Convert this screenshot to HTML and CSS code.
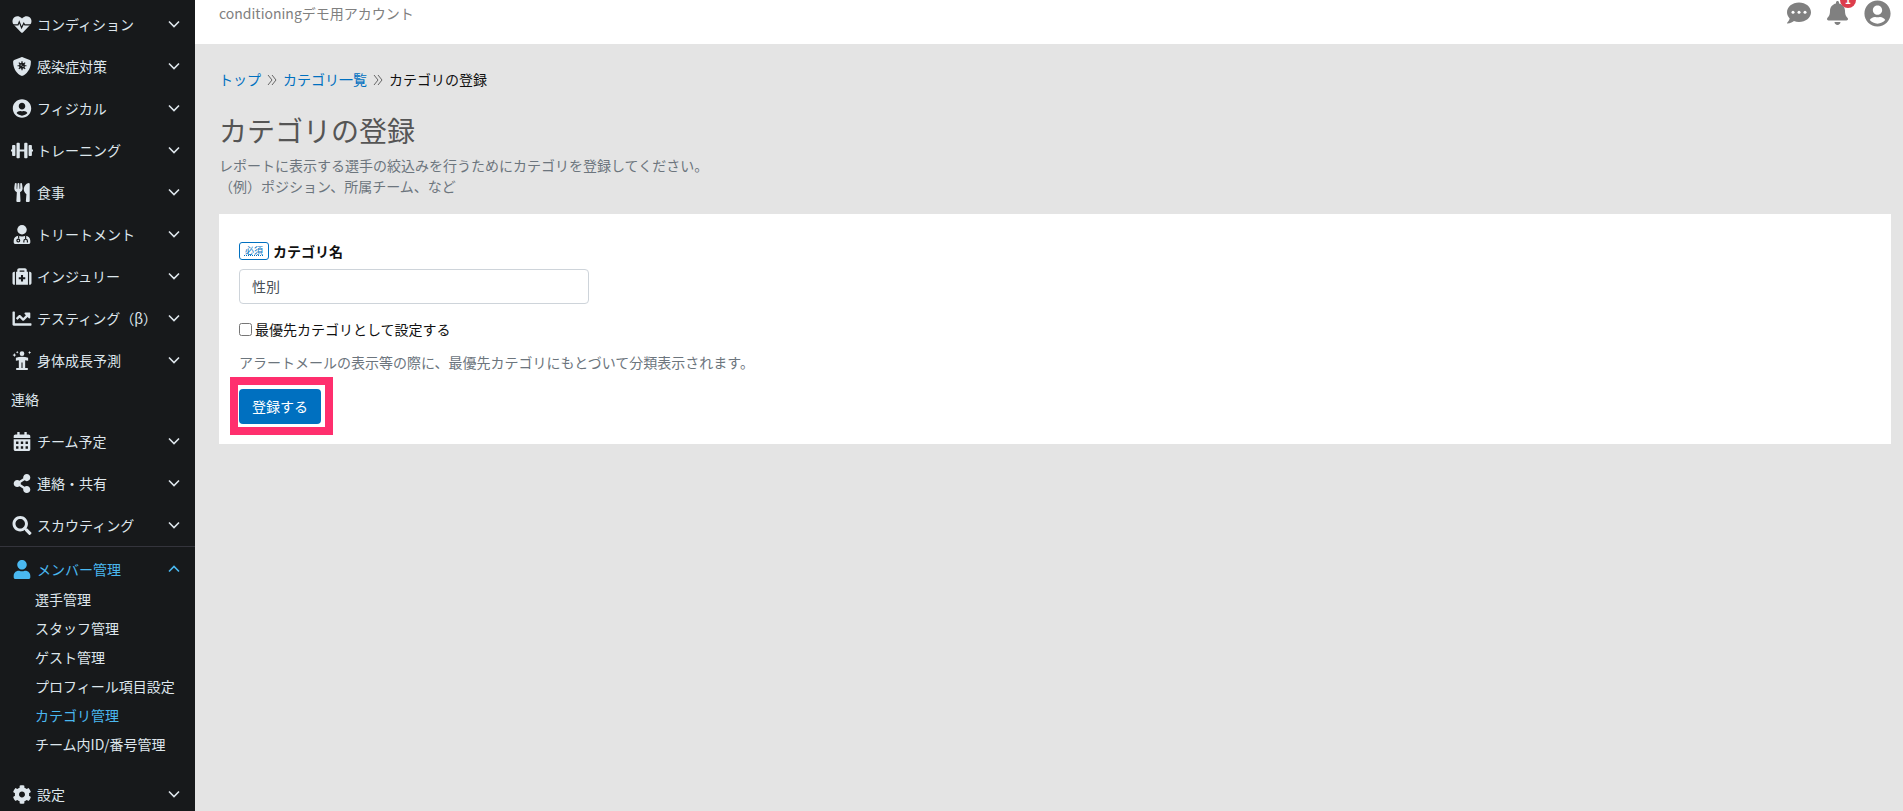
FILE: index.html
```
<!DOCTYPE html>
<html lang="ja">
 <head>
  <meta charset="utf-8">
  <title>カテゴリの登録</title>
  <meta name="viewport" content="width=device-width,initial-scale=1.0">
  <link rel="stylesheet" href="styles.css">
 </head>
 <body>
  <svg class="defs">
   <symbol id="down" viewBox="0 0 12 12"><path d="M1 3.5l5 5 5-5" fill="none" stroke="currentColor" stroke-width="1.6"/></symbol>
   <symbol id="up" viewBox="0 0 12 12"><path d="M1 8.5l5-5 5 5" fill="none" stroke="currentColor" stroke-width="1.6"/></symbol>
   <symbol id="person" viewBox="0 0 496 512"><path d="M248 8C111 8 0 119 0 256s111 248 248 248 248-111 248-248S385 8 248 8zm0 96c48.6 0 88 39.4 88 88s-39.4 88-88 88-88-39.4-88-88 39.4-88 88-88zm0 344c-58.7 0-111.3-26.6-146.5-68.2 18.8-35.4 55.6-59.8 98.5-59.8 2.4 0 4.8.4 7.1 1.1 13 4.2 26.6 6.9 40.9 6.9 14.3 0 28-2.7 40.9-6.9 2.3-.7 4.7-1.1 7.1-1.1 42.9 0 79.7 24.4 98.5 59.8C359.3 421.4 306.7 448 248 448z"/></symbol>
  </svg>
  <nav class="sidebar">
   <a class="item" href="#"><svg class="icon" viewBox="0 0 512 512"><path d="M462 62c-55-47-136-38-186 14l-20 20-20-20C186 24 105 15 50 62c-63 54-66 150-10 208l193 200c13 13 33 13 46 0l193-200c56-58 53-154-10-208z"/><path class="cut" d="M0 268h148l34-82 62 156 60-122 28 48h180"/></svg><span>コンディション</span><svg class="arrow"><use href="#down"/></svg></a>
   <a class="item" href="#"><svg class="icon" viewBox="0 0 512 512"><path d="M466 84L274 4c-12-5-25-5-37 0L45 84c-18 7-29 24-29 44 0 198 114 336 221 380 12 5 25 5 37 0 86-36 222-159 222-380 0-20-12-37-30-44z"/><circle class="dark" cx="256" cy="236" r="78"/><path class="cut" d="M256 116v240M136 236h240M171 151l170 170M341 151L171 321"/><circle cx="232" cy="216" r="17"/><circle cx="282" cy="252" r="15"/></svg><span>感染症対策</span><svg class="arrow"><use href="#down"/></svg></a>
   <a class="item" href="#"><svg class="icon"><use href="#person"/></svg><span>フィジカル</span><svg class="arrow"><use href="#down"/></svg></a>
   <a class="item" href="#"><svg class="icon" viewBox="0 0 640 512"><path d="M104 96H56c-13 0-24 11-24 24v104H8c-4 0-8 4-8 8v48c0 4 4 8 8 8h24v104c0 13 11 24 24 24h48c13 0 24-11 24-24V120c0-13-11-24-24-24zm528 128h-24V120c0-13-11-24-24-24h-48c-13 0-24 11-24 24v272c0 13 11 24 24 24h48c13 0 24-11 24-24V288h24c4 0 8-4 8-8v-48c0-4-4-8-8-8zM456 32h-48c-13 0-24 11-24 24v168H256V56c0-13-11-24-24-24h-48c-13 0-24 11-24 24v400c0 13 11 24 24 24h48c13 0 24-11 24-24V288h128v168c0 13 11 24 24 24h48c13 0 24-11 24-24V56c0-13-11-24-24-24z"/></svg><span>トレーニング</span><svg class="arrow"><use href="#down"/></svg></a>
   <a class="item" href="#"><svg class="icon" viewBox="0 0 416 512"><path d="M207.9 15.2c.8 4.7 16.1 94.5 16.1 128.8 0 52.3-27.8 89.6-68.9 104.6L168 486.7c.7 13.7-10.2 25.3-24 25.3H80c-13.7 0-24.7-11.5-24-25.3l12.9-238.1C27.7 233.6 0 196.2 0 144 0 109.6 15.3 19.9 16.1 15.2 19.3-5.1 61.4-5.4 64 16.3v141.2c1.3 3.4 15.1 3.2 16 0 1.4-25.3 7.9-139.2 8-141.8 3.3-20.8 44.7-20.8 47.9 0 .2 2.7 6.6 116.5 8 141.8.9 3.2 14.8 3.4 16 0V16.3c2.6-21.6 44.8-21.4 48-1.1zm119.2 285.7l-15 185.1c-1.2 14 9.9 26 23.9 26h56c13.3 0 24-10.7 24-24V24c0-13.2-10.7-24-24-24-82.5 0-221.4 178.5-64.9 300.9z"/></svg><span>食事</span><svg class="arrow"><use href="#down"/></svg></a>
   <a class="item" href="#"><svg class="icon" viewBox="0 0 448 512"><circle cx="224" cy="128" r="128"/><path d="M128 288C54 292 0 350 0 422v42c0 27 21 48 48 48h352c27 0 48-21 48-48v-42c0-72-54-130-128-134-28 14-62 20-96 20s-68-6-96-20z"/><circle class="cut" cx="124" cy="420" r="38"/><path class="cut" d="M134 286v76M274 470v-40c0-62 96-62 96 0v40M322 286v90"/></svg><span>トリートメント</span><svg class="arrow"><use href="#down"/></svg></a>
   <a class="item" href="#"><svg class="icon" viewBox="0 0 512 512"><path fill-rule="evenodd" d="M96 480h320V128h-32V80c0-26-22-48-48-48H176c-26 0-48 22-48 48v48H96zm96-384h128v32H192zM0 176v256c0 26 22 48 48 48h16V128H48c-26 0-48 22-48 48zm464-48h-16v352h16c26 0 48-22 48-48V176c0-26-22-48-48-48zM228 216h56v60h60v56h-60v60h-56v-60h-60v-56h60z"/></svg><span>インジュリー</span><svg class="arrow"><use href="#down"/></svg></a>
   <a class="item" href="#"><svg class="icon" viewBox="0 0 512 512"><path d="M496 384H64V80c0-8.84-7.16-16-16-16H16C7.16 64 0 71.16 0 80v336c0 17.67 14.33 32 32 32h464c8.84 0 16-7.16 16-16v-32c0-8.84-7.16-16-16-16zM464 96H345.94c-21.38 0-32.09 25.85-16.97 40.97l32.4 32.4L288 242.75l-73.37-73.37c-12.5-12.5-32.76-12.5-45.25 0l-68.69 68.69c-6.25 6.25-6.25 16.38 0 22.63l22.62 22.62c6.25 6.25 16.38 6.25 22.63 0L192 237.25l73.37 73.37c12.5 12.5 32.76 12.5 45.25 0l96-96 32.4 32.4c15.12 15.12 40.97 4.41 40.97-16.97V112c.01-8.84-7.15-16-15.99-16z"/></svg><span>テスティング（β）</span><svg class="arrow"><use href="#down"/></svg></a>
   <a class="item" href="#"><svg class="icon" viewBox="0 0 18 18"><circle cx="9" cy="2.5" r="2.2"/><path d="M3.2 6.5Q9 4.6 14.8 6.5V9.2L12 8.800V16h2.500v2h-11v-2H6V8.800l-2.800.4zM1.800 2l.6 1.200 1.200.6-1.200.6-.6 1.200-.6-1.200L0 3.800l1.200-.6zM16.200 0l.5 1 1 .5-1 .5-.5 1-.5-1-1-.5 1-.5zM4.500 0l.4.8.8.4-.8.4-.4.8-.4-.8-.8-.4.800-.4z"/><path class="line" d="M9 11v5"/></svg><span>身体成長予測</span><svg class="arrow"><use href="#down"/></svg></a>
   <p class="group">連絡</p>
   <a class="item" href="#"><svg class="icon" viewBox="0 0 448 512"><path fill-rule="evenodd" d="M0 160v-48c0-26 22-48 48-48h48V12c0-7 5-12 12-12h40c7 0 12 5 12 12v52h128V12c0-7 5-12 12-12h40c7 0 12 5 12 12v52h48c26 0 48 22 48 48v48zm0 32h448v272c0 26-22 48-48 48H48c-26 0-48-22-48-48zm64 64v64h64v-64zm128 0v64h64v-64zm128 0v64h64v-64zM64 384v64h64v-64zm128 0v64h64v-64zm128 0v64h64v-64z"/></svg><span>チーム予定</span><svg class="arrow"><use href="#down"/></svg></a>
   <a class="item" href="#"><svg class="icon" viewBox="0 0 448 512"><path d="M352 320c-22.608 0-43.387 7.819-59.79 20.895l-102.486-64.054a96.551 96.551 0 0 0 0-41.683l102.486-64.054C308.613 184.181 329.392 192 352 192c53.019 0 96-42.981 96-96S405.019 0 352 0s-96 42.981-96 96c0 7.158.79 14.13 2.276 20.841L155.79 180.895C139.387 167.819 118.608 160 96 160c-53.019 0-96 42.981-96 96s42.981 96 96 96c22.608 0 43.387-7.819 59.79-20.895l102.486 64.054A96.301 96.301 0 0 0 256 416c0 53.019 42.981 96 96 96s96-42.981 96-96-42.981-96-96-96z"/></svg><span>連絡・共有</span><svg class="arrow"><use href="#down"/></svg></a>
   <a class="item" href="#"><svg class="icon" viewBox="0 0 512 512"><path d="M505 442.7L405.3 343c-4.5-4.5-10.6-7-17-7H372c27.6-35.3 44-79.7 44-128C416 93.1 322.9 0 208 0S0 93.1 0 208s93.1 208 208 208c48.3 0 92.7-16.4 128-44v16.3c0 6.4 2.5 12.5 7 17l99.7 99.7c9.4 9.4 24.6 9.4 33.9 0l28.3-28.3c9.4-9.4 9.4-24.6.1-34zM208 336c-70.7 0-128-57.2-128-128 0-70.7 57.2-128 128-128 70.7 0 128 57.2 128 128 0 70.7-57.2 128-128 128z"/></svg><span>スカウティング</span><svg class="arrow"><use href="#down"/></svg></a>
   <div class="open">
    <a class="item active" href="#"><svg class="icon" viewBox="0 0 448 512"><path d="M224 256c70.7 0 128-57.3 128-128S294.7 0 224 0 96 57.3 96 128s57.3 128 128 128zm89.6 32h-16.7c-22.2 10.2-46.9 16-72.9 16s-50.6-5.8-72.9-16h-16.7C60.2 288 0 348.2 0 422.4V464c0 26.5 21.5 48 48 48h352c26.5 0 48-21.5 48-48v-41.6c0-74.2-60.2-134.4-134.4-134.4z"/></svg><span>メンバー管理</span><svg class="arrow"><use href="#up"/></svg></a>
    <ul class="sub">
     <li><a href="#">選手管理</a></li>
     <li><a href="#">スタッフ管理</a></li>
     <li><a href="#">ゲスト管理</a></li>
     <li><a href="#">プロフィール項目設定</a></li>
     <li><a class="active" href="#">カテゴリ管理</a></li>
     <li><a href="#">チーム内ID/番号管理</a></li>
    </ul>
   </div>
   <a class="item" href="#"><svg class="icon" viewBox="0 0 512 512"><path d="M487.4 315.7l-42.6-24.6c4.3-23.2 4.3-47 0-70.2l42.6-24.6c4.9-2.8 7.1-8.6 5.5-14-11.1-35.6-30-67.8-54.7-94.6-3.8-4.1-10-5.1-14.8-2.3L380.8 110c-17.9-15.4-38.5-27.3-60.8-35.1V25.8c0-5.6-3.9-10.5-9.4-11.7-36.7-8.2-74.3-7.8-109.2 0-5.5 1.2-9.4 6.1-9.4 11.7V75c-22.2 7.9-42.8 19.8-60.8 35.1L88.7 85.5c-4.9-2.8-11-1.9-14.8 2.3-24.7 26.7-43.6 58.9-54.7 94.6-1.7 5.4.6 11.2 5.5 14L67.3 221c-4.3 23.2-4.3 47 0 70.2l-42.6 24.6c-4.9 2.8-7.1 8.6-5.5 14 11.1 35.6 30 67.8 54.7 94.6 3.8 4.1 10 5.1 14.8 2.3l42.6-24.6c17.9 15.4 38.5 27.3 60.8 35.1v49.2c0 5.6 3.9 10.5 9.4 11.7 36.7 8.2 74.3 7.8 109.2 0 5.5-1.2 9.4-6.1 9.4-11.7v-49.2c22.2-7.9 42.8-19.8 60.8-35.1l42.6 24.6c4.9 2.8 11 1.9 14.8-2.3 24.7-26.7 43.6-58.9 54.7-94.6 1.5-5.5-.7-11.3-5.6-14.1zM256 336c-44.1 0-80-35.9-80-80s35.9-80 80-80 80 35.9 80 80-35.9 80-80 80z"/></svg><span>設定</span><svg class="arrow"><use href="#down"/></svg></a>
  </nav>
  <div class="page">
   <header class="topbar">
    <span class="account">conditioningデモ用アカウント</span>
    <a class="tool" href="#" aria-label="メッセージ"><svg class="msg" viewBox="0 0 512 512"><path d="M256 32C114.6 32 0 125.1 0 240c0 49.6 21.4 95 57 130.7C44.5 421.1 2.7 466 2.2 466.5c-2.2 2.3-2.8 5.7-1.5 8.7S4.8 480 8 480c66.3 0 116-31.8 140.6-51.4 32.7 12.3 69 19.4 107.4 19.4 141.4 0 256-93.1 256-208S397.4 32 256 32z"/><g fill="#fff"><circle cx="128" cy="240" r="32"/><circle cx="256" cy="240" r="32"/><circle cx="384" cy="240" r="32"/></g></svg></a>
    <a class="tool" href="#" aria-label="お知らせ"><svg class="bell" viewBox="0 0 448 512"><path d="M224 512c35.32 0 63.97-28.65 63.97-64H160.03c0 35.35 28.65 64 63.97 64zm215.39-149.71c-19.32-20.76-55.47-51.99-55.47-154.29 0-77.7-54.48-139.9-127.94-155.16V32c0-17.67-14.32-32-31.98-32s-31.98 14.33-31.98 32v20.84C118.56 68.1 64.08 130.3 64.08 208c0 102.3-36.15 133.53-55.47 154.29-6 6.45-8.66 14.16-8.61 21.71.11 16.4 12.98 32 32.1 32h383.8c19.12 0 32-15.6 32.1-32 .05-7.55-2.61-15.27-8.61-21.71z"/></svg><span class="count">1</span></a>
    <a class="tool" href="#" aria-label="アカウント"><svg class="me"><use href="#person"/></svg></a>
   </header>
   <main>
    <nav class="crumbs">
     <a href="#">トップ</a>
     <svg viewBox="0 0 10 12"><path d="M1 1l4 5-4 5M5 1l4 5-4 5"/></svg>
     <a href="#">カテゴリ一覧</a>
     <svg viewBox="0 0 10 12"><path d="M1 1l4 5-4 5M5 1l4 5-4 5"/></svg>
     <span>カテゴリの登録</span>
    </nav>
    <h1>カテゴリの登録</h1>
    <p class="lead">レポートに表示する選手の絞込みを行うためにカテゴリを登録してください。<br>（例）ポジション、所属チーム、など</p>
    <form class="card">
     <div class="label"><abbr class="must" title="必須">必須</abbr><label for="name">カテゴリ名</label></div>
     <input id="name" class="text" type="text" value="性別">
     <div class="check"><input id="top" type="checkbox"><label for="top">最優先カテゴリとして設定する</label></div>
     <p class="help">アラートメールの表示等の際に、最優先カテゴリにもとづいて分類表示されます。</p>
     <div class="submit"><button type="button">登録する</button></div>
    </form>
   </main>
  </div>
 </body>
</html>
```
FILE: styles.css
```
* {box-sizing:border-box}
body {margin:0; display:flex; height:100vh; overflow:hidden; background:#e4e4e4; color:#111; font:14px/21px "Noto Sans CJK JP", sans-serif}
a {color:#0070c0; text-decoration:none}
svg {fill:currentColor; flex:none}
.defs {display:none}

.sidebar {flex:none; width:195px; padding-top:3px; background:#17191b; color:#dee6ec; overflow:hidden}
.sidebar a {color:inherit}
.sidebar .active {color:#4ab8f0}
.item {display:flex; align-items:center; height:42px; padding:0 15px 0 11px; white-space:nowrap}
.item span {flex:1}
.icon {width:22px; height:19px; margin-right:4px}
.arrow {width:12px; height:12px}
.cut {fill:none; stroke:#17191b; stroke-width:32}
.line {fill:none; stroke:#17191b; stroke-width:1}
.dark {fill:#17191b}
.group {margin:0; padding:8px 11px 10px}
.open {border-top:1px solid #34343c; padding:1px 0 14px}
.sub {list-style:none; margin:-5px 0 0; padding:0 0 0 35px; white-space:nowrap}
.sub a {display:block; line-height:29px}

.page {flex:1; min-width:0}
.topbar {display:flex; align-items:flex-start; height:44px; padding:0 12px 0 24px; background:#fff; color:#808080}
.account {flex:1; padding-top:3px}
.tool {position:relative; display:flex; align-items:center; height:26px; margin-left:16px; color:inherit}
.msg {width:24px; height:24px}
.bell {width:21px; height:24px}
.me {width:27px; height:27px}
.count {position:absolute; left:13px; top:-8px; width:16px; height:16px; border-radius:8px; background:#dc3d4c; color:#fff; font-size:10px; font-weight:700; line-height:16px; text-align:center}

main {padding:23px 12px 0 24px}
.crumbs {display:flex; align-items:center; gap:6px; height:24px}
.crumbs svg {width:10px; height:12px; margin-top:2px; fill:none; stroke:#666}
h1 {margin:21px 0 7px; color:#555; font-size:28px; line-height:36px; font-weight:400}
.lead, .help {margin:0; color:#6c757d}
.lead {margin-bottom:17px}
.card {padding:25px 20px 20px; background:#fff}
.label {display:flex; align-items:center; gap:4px; height:24px; margin-bottom:6px; font-weight:700}
.must {width:27px; height:18px; width:30px; border:1px solid #0070c0; border-radius:3px; color:#0070c0; font-size:9px; line-height:16px; font-weight:400; text-align:center; text-decoration:underline dotted}
.text {display:block; width:350px; max-width:100%; height:35px; padding:0 12px 1px; border:1px solid #ced4da; border-radius:4px; color:#495057; font:inherit}
.check {display:flex; align-items:center; gap:3px; margin:15px 0 12px}
.check input {width:13px; height:13px; margin:0}
.submit {position:relative; width:max-content; margin-top:16px}
.submit::after {content:""; position:absolute; inset:-12px -12px -11px -9px; border:8px solid #ff2f6e; pointer-events:none}
button {display:block; height:35px; padding:0 13px; border:0; border-radius:4px; background:#0070c0; color:#fff; font:inherit}
```
